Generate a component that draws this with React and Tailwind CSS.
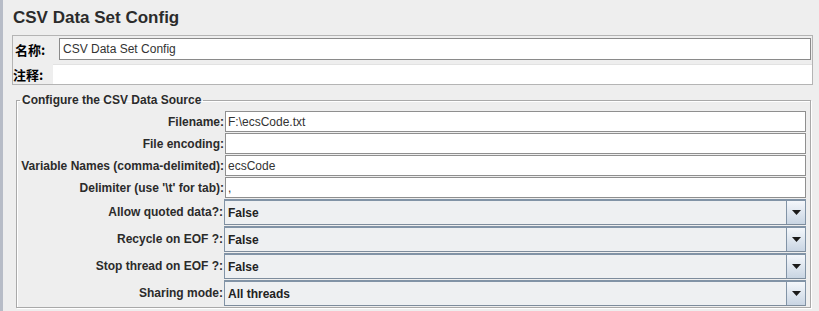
import React from "react";

const TEXT_ROWS = [
  { label: "Filename:", value: "F:\\ecsCode.txt" },
  { label: "File encoding:", value: "" },
  { label: "Variable Names (comma-delimited):", value: "ecsCode" },
  { label: "Delimiter (use '\\t' for tab):", value: "," },
];

const COMBO_ROWS = [
  { label: "Allow quoted data?:", value: "False" },
  { label: "Recycle on EOF ?:", value: "False" },
  { label: "Stop thread on EOF ?:", value: "False" },
  { label: "Sharing mode:", value: "All threads" },
];

function Combo({ value }) {
  return (
    <div className="flex h-[26px] border border-t-2 border-[#8193a6] border-b-[#7d8c9c] bg-[#eef0f2]">
      <div className="flex flex-1 items-center pl-[3px] font-bold text-[#222]">{value}</div>
      <div className="flex w-[19px] items-center justify-center border-l border-[#8193a6] bg-gradient-to-b from-[#f4f7fb] to-[#c9d5e3]">
        <svg width="9" height="5" viewBox="0 0 9 5">
          <path d="M0 0h9L4.5 5z" fill="#1a1a1a" />
        </svg>
      </div>
    </div>
  );
}

export default function App() {
  return (
    <div className="h-[311px] w-[819px] overflow-hidden border-l-[3px] border-[#b7bcc7] bg-[#eeeeee] font-['Liberation_Sans',Arial,sans-serif] text-[12px] text-[#2b2b2b]">
      <h1 className="h-[35px] pl-[10px] pt-[8px] text-[17px] font-bold leading-[20px] text-[#2b2b2b]">
        CSV Data Set Config
      </h1>

      <div className="ml-[9px] w-[801px] border border-[#b4b4b4] bg-[#eeeeee] pt-[2px]">
        <div className="flex h-[22px] items-center">
          <span className="w-[46px] pl-[2px] font-['Noto_Sans_CJK_SC',sans-serif] text-[13px] font-bold leading-none text-black">
            名称:
          </span>
          <div className="mr-[1px] flex h-[22px] flex-1 items-center border border-[#8a8a8a] bg-white pl-[3px] text-[#333]">
            CSV Data Set Config
          </div>
        </div>
        <div className="mt-[4px] flex h-[20px] items-center">
          <span className="w-[40px] font-['Noto_Sans_CJK_SC',sans-serif] text-[13px] font-bold leading-none text-black">
            注释:
          </span>
          <div className="h-[20px] flex-1 border-t border-[#e2e2e2] bg-white" />
        </div>
      </div>

      <fieldset className="ml-[13px] mt-[7px] w-[795px] border border-[#a9a9a9] pb-[1px] pr-[4px] shadow-[inset_1px_1px_0_#ffffff,1px_1px_0_#ffffff]">
        <legend className="ml-[3px] px-[2px] font-bold leading-[16px]">
          Configure the CSV Data Source
        </legend>
        <div className="mt-[3px] grid grid-cols-[208px_1fr] gap-y-[1px]">
          {TEXT_ROWS.map((r) => (
            <React.Fragment key={r.label}>
              <div className="flex h-[21px] items-center justify-end pr-[1px] font-bold">{r.label}</div>
              <div className="flex h-[21px] items-center border border-[#8f8f8f] bg-white pl-[2px] text-[#333]">
                {r.value}
              </div>
            </React.Fragment>
          ))}
        </div>
        <div className="mt-[1px] grid grid-cols-[207px_1fr] gap-y-[1px]">
          {COMBO_ROWS.map((r) => (
            <React.Fragment key={r.label}>
              <div className="flex h-[26px] items-center justify-end pr-[1px] font-bold">{r.label}</div>
              <Combo value={r.value} />
            </React.Fragment>
          ))}
        </div>
      </fieldset>
    </div>
  );
}
